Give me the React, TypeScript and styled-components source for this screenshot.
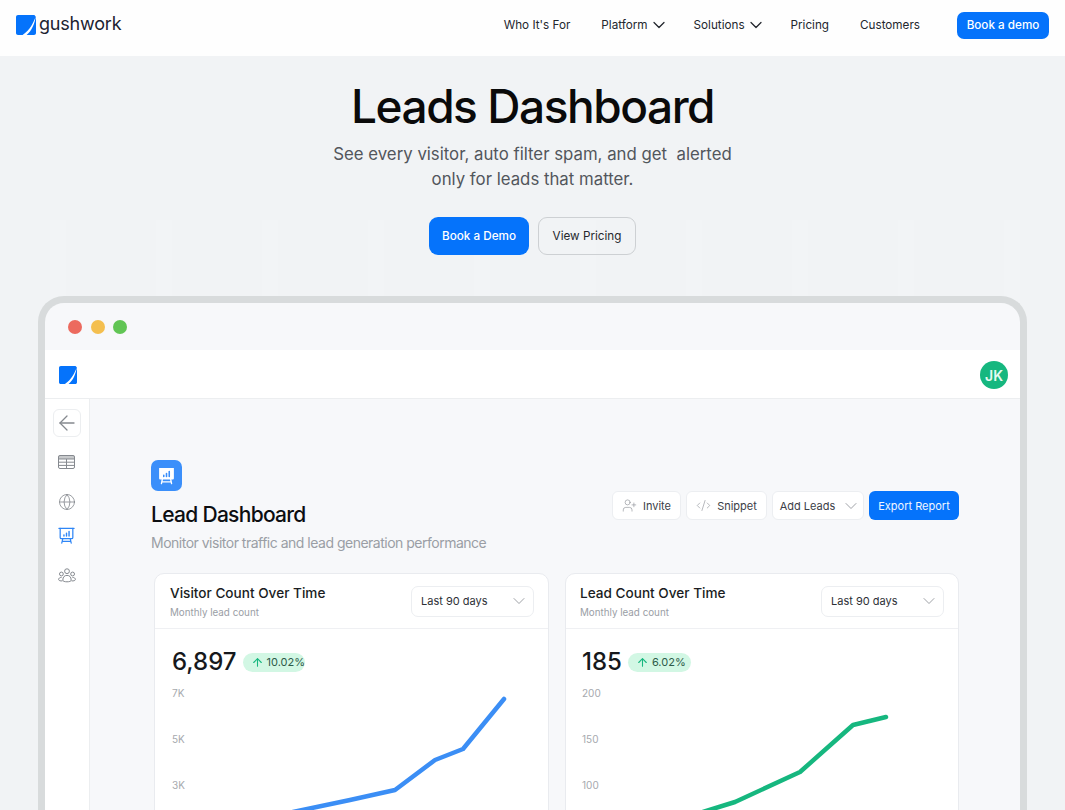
import styled, { createGlobalStyle } from 'styled-components';
import { ArrowLeft, ArrowUp, ChevronDown, CodeXml, Globe, UserPlus } from 'lucide-react';

const Global = createGlobalStyle`
  html, body { margin: 0; padding: 0; }
  body { font-family: Inter, "Liberation Sans", sans-serif; background: #f1f3f5; color: #111418; }
  * { box-sizing: border-box; }
`;

/* ---------- page ---------- */
const Page = styled.div`
  height: 810px;
  overflow: hidden;
  background:
    repeating-linear-gradient(90deg, rgba(255,255,255,0) 0 50px, rgba(255,255,255,.1) 50px 66px, rgba(255,255,255,0) 66px 106px) 0 220px / 100% 100% no-repeat,
    #f1f3f5;
`;

const Header = styled.header`
  height: 56px;
  background: #fefefe;
  display: flex;
  align-items: center;
  justify-content: space-between;
  padding: 0 16px 6px;
`;

const Brand = styled.div`
  display: flex;
  align-items: center;
  gap: 3px;
`;

const Wordmark = styled.span`
  font-size: 18px;
  font-weight: 400;
  letter-spacing: -0.2px;
  color: #1b2230;
  line-height: 20px;
  margin-top: -2px;
`;

const Nav = styled.nav`
  display: flex;
  align-items: center;
`;

const NavItem = styled.a<{ $gap: number }>`
  display: flex;
  align-items: center;
  gap: 1px;
  font-size: 11.7px;
  color: #23272e;
  margin-right: ${p => p.$gap}px;
  svg { color: #23272e; }
`;

const NavButton = styled.a`
  width: 92px;
  height: 27px;
  border-radius: 7px;
  background: #0573fb;
  color: #fff;
  font-size: 11.7px;
  font-weight: 500;
  display: flex;
  align-items: center;
  justify-content: center;
`;

/* ---------- hero ---------- */
const Hero = styled.section`
  display: flex;
  flex-direction: column;
  align-items: center;
  padding-top: 21px;
`;

const Title = styled.h1`
  margin: 0;
  font-size: 46px;
  line-height: 58px;
  font-weight: 530;
  letter-spacing: -1.45px;
  color: #0a0a0a;
`;

const Sub = styled.p`
  margin: 7px 0 0;
  font-size: 16.8px;
  line-height: 24.5px;
  color: #52565c;
  text-align: center;
  white-space: pre-line;
`;

const HeroActions = styled.div`
  display: flex;
  gap: 9px;
  margin-top: 26px;
`;

const HeroButton = styled.a<{ $primary?: boolean }>`
  height: 38px;
  width: ${p => (p.$primary ? 100 : 98)}px;
  border-radius: 9px;
  display: flex;
  align-items: center;
  justify-content: center;
  font-size: 11.7px;
  font-weight: ${p => (p.$primary ? 500 : 400)};
  background: ${p => (p.$primary ? '#0573fb' : 'transparent')};
  color: ${p => (p.$primary ? '#fff' : '#25282d')};
  border: ${p => (p.$primary ? 'none' : '1px solid #cdd0d3')};
`;

/* ---------- browser frame ---------- */
const Frame = styled.div`
  margin: 41px 0 0 38px;
  width: 989px;
  height: 700px;
  border: 7px solid #d8dbdc;
  border-bottom: none;
  border-radius: 26px 26px 0 0;
  background: #f7f8fa;
  overflow: hidden;
`;

const TitleBar = styled.div`
  height: 47px;
  display: flex;
  align-items: center;
  gap: 8.5px;
  padding-left: 23px;
`;

const Dot = styled.span<{ $color: string }>`
  width: 14px;
  height: 14px;
  border-radius: 50%;
  background: ${p => p.$color};
`;

const AppBar = styled.div`
  height: 49px;
  background: #fff;
  border-bottom: 1px solid #eceef0;
  display: flex;
  align-items: center;
  justify-content: space-between;
  padding: 2px 12px 0 14px;
`;

const Avatar = styled.div`
  width: 28px;
  height: 28px;
  border-radius: 50%;
  background: #16b77f;
  color: #e6fbf2;
  font-size: 14px;
  font-weight: 600;
  display: flex;
  align-items: center;
  justify-content: center;
`;

const Body = styled.div`
  display: flex;
  height: 500px;
`;

const Sidebar = styled.aside`
  width: 45px;
  background: #fff;
  border-right: 1px solid #eceef0;
  display: flex;
  flex-direction: column;
  align-items: center;
  padding-top: 10px;
  padding-right: 1px;
  color: #85898f;
`;

const BackButton = styled.div`
  width: 28px;
  height: 28px;
  border: 1px solid #eceef0;
  border-radius: 6px;
  display: flex;
  align-items: center;
  justify-content: center;
  margin-bottom: 16px;
`;

const SideIcon = styled.div<{ $after: number }>`
  height: 18px;
  display: flex;
  align-items: center;
  margin-bottom: ${p => p.$after}px;
`;

const Main = styled.main`
  flex: 1;
  padding: 61px 61px 0 61px;
`;

const TopRow = styled.div`
  display: flex;
  justify-content: space-between;
  align-items: flex-start;
`;

const IconTile = styled.div`
  width: 31px;
  height: 31px;
  border-radius: 7px;
  background: #3b8ffa;
  display: flex;
  align-items: center;
  justify-content: center;
`;

const PageTitle = styled.h2`
  margin: 9px 0 0;
  font-size: 21px;
  line-height: 30px;
  font-weight: 500;
  letter-spacing: -0.7px;
  color: #0c0e11;
`;

const PageSub = styled.p`
  margin: 3px 0 0;
  font-size: 14px;
  line-height: 20px;
  letter-spacing: -0.5px;
  color: #9a9ea5;
`;

const Actions = styled.div`
  display: flex;
  gap: 5px;
  margin-top: 31px;
`;

const ActionButton = styled.button<{ $width: number; $lead?: number; $primary?: boolean }>`
  width: ${p => p.$width}px;
  height: 29px;
  padding: 0 0 0 ${p => p.$lead ?? 0}px;
  border-radius: 6px;
  font-family: inherit;
  font-size: 11px;
  display: flex;
  align-items: center;
  justify-content: center;
  gap: 6px;
  background: ${p => (p.$primary ? '#0573fb' : '#fff')};
  color: ${p => (p.$primary ? '#f0f6ff' : '#3c4047')};
  border: ${p => (p.$primary ? 'none' : '1px solid #eceef1')};
  svg { color: #8b8f95; flex: none; }
`;

const Cards = styled.div`
  display: grid;
  grid-template-columns: 395px 394px;
  gap: 16px;
  margin: 20px 0 0 3px;
`;

const Card = styled.section`
  background: #fff;
  border: 1px solid #e9ebef;
  border-radius: 10px;
  height: 300px;
`;

const CardHead = styled.div<{ $inset: number }>`
  height: 55px;
  border-bottom: 1px solid #eff0f3;
  display: flex;
  align-items: center;
  justify-content: space-between;
  padding: 0 14px 0 ${p => p.$inset}px;
`;

const CardTitle = styled.h3`
  margin: 2px 0 0;
  font-size: 13.6px;
  line-height: 18px;
  font-weight: 500;
  color: #1a1d22;
`;

const CardSub = styled.p`
  margin: 4px 0 0;
  font-size: 9.8px;
  line-height: 14px;
  color: #9a9ea5;
`;

const Select = styled.div`
  width: 123px;
  height: 31px;
  border: 1px solid #eceef1;
  border-radius: 7px;
  display: flex;
  align-items: center;
  justify-content: space-between;
  padding: 0 4px 0 9px;
  font-size: 11px;
  color: #2d3036;
  svg { color: #8b8f95; }
`;

const CardBody = styled.div<{ $inset: number }>`
  padding: 19px 17px 0 ${p => p.$inset + 2}px;
  position: relative;
`;

const Stat = styled.div`
  display: flex;
  align-items: center;
  gap: 6px;
`;

const StatValue = styled.span`
  font-size: 24px;
  line-height: 28px;
  font-weight: 500;
  color: #16181c;
`;

const Badge = styled.span<{ $width: number }>`
  width: ${p => p.$width}px;
  height: 19px;
  padding-left: 8px;
  border-radius: 10px;
  background: #d2f7e4;
  color: #2d5a49;
  font-size: 11px;
  overflow: hidden;
  white-space: nowrap;
  display: flex;
  align-items: center;
  gap: 3px;
  svg { color: #16b77f; flex: none; }
`;

const Axis = styled.div`
  display: flex;
  flex-direction: column;
  gap: 32px;
  margin-top: 10px;
  font-size: 10px;
  line-height: 14px;
  color: #a6a9ae;
`;

const ChartLine = styled.svg`
  position: absolute;
  left: 0;
  top: 0;
  overflow: visible;
`;

const LogoMark = ({ size }: { size: number }) => (
  <svg width={size} height={size} viewBox="0 0 20 20" fill="none">
    <path d="M2 0H18.3L20 1.7V18C20 19.1 19.1 20 18 20H2C.9 20 0 19.1 0 18V2C0 .9 .9 0 2 0Z" fill="#0573fb" />
    <path d="M20 0.6C17.8 7.6 13.6 15.6 6.6 20H10.6C15.6 16.2 18.8 8.8 20 0.6Z" fill="#fff" />
  </svg>
);

const TableIcon = () => (
  <svg width="17" height="14" viewBox="0 0 17 14" fill="none" stroke="currentColor" strokeWidth="1">
    <rect x=".5" y=".5" width="16" height="13" rx="1.5" />
    <path d="M.5 4H16.5M.5 7.2H16.5M.5 10.4H16.5M8.5 4V13.5" />
    <rect x=".5" y=".5" width="16" height="3.5" fill="currentColor" opacity=".45" stroke="none" />
  </svg>
);

const BoardIcon = ({ color, size }: { color: string; size: number }) => (
  <svg width={size} height={size} viewBox="0 0 18 18" fill="none" stroke={color} strokeWidth="1.3" strokeLinecap="round">
    <path d="M1 1.5H17" />
    <path d="M2.3 1.5V11C2.3 11.8 2.8 12.3 3.6 12.3H14.4C15.2 12.3 15.7 11.8 15.7 11V1.5" />
    <path d="M5 12.5L4 17M13 12.5L14 17M4.4 15.2H13.6" />
    <path d="M6.3 9.5V8.3M9 9.5V6.6M11.7 9.5V4.8" strokeWidth="1.5" />
  </svg>
);

const TileIcon = () => (
  <svg width="19" height="19" viewBox="0 0 18 18" fill="none" strokeLinecap="round">
    <path d="M2 2H16V11.5C16 12.3 15.5 12.8 14.7 12.8H3.3C2.5 12.8 2 12.3 2 11.5Z" fill="#fff" />
    <path d="M5 12.8L4.2 16.6M13 12.8L13.8 16.6M4.6 15H13.4" stroke="#fff" strokeWidth="1.3" />
    <path d="M6.4 10V8.8M9 10V7.2M11.6 10V5.2" stroke="#3b8ffa" strokeWidth="1.5" />
  </svg>
);

const TeamIcon = () => (
  <svg width="18" height="16" viewBox="0 0 18 16" fill="none" stroke="currentColor" strokeWidth="1">
    <circle cx="9" cy="3.2" r="2.4" />
    <circle cx="3.4" cy="6" r="1.9" />
    <circle cx="14.6" cy="6" r="1.9" />
    <path d="M4.8 12.3C4.8 8.7 6.6 7.4 9 7.4S13.2 8.7 13.2 12.3C13.2 14.3 4.8 14.3 4.8 12.3Z" />
    <path d="M3.6 9.4C1.6 9.4.6 10.4.6 11.4.6 12.6 2.4 13.1 4.4 12.9M14.4 9.4C16.4 9.4 17.4 10.4 17.4 11.4 17.4 12.6 15.6 13.1 13.6 12.9" />
  </svg>
);

type ChartProps = {
  title: string;
  value: string;
  change: string;
  badgeWidth: number;
  labels: string[];
  color: string;
  points: string;
  inset: number;
};

const ChartCard = ({ title, value, change, badgeWidth, labels, color, points, inset }: ChartProps) => (
  <Card>
    <CardHead $inset={inset}>
      <div>
        <CardTitle>{title}</CardTitle>
        <CardSub>Monthly lead count</CardSub>
      </div>
      <Select>
        Last 90 days
        <ChevronDown size={20} strokeWidth={1} />
      </Select>
    </CardHead>
    <CardBody $inset={inset}>
      <Stat>
        <StatValue>{value}</StatValue>
        <Badge $width={badgeWidth}>
          <ArrowUp size={13} strokeWidth={2} />
          {change}
        </Badge>
      </Stat>
      <Axis>
        {labels.map(l => <span key={l}>{l}</span>)}
      </Axis>
      <ChartLine width="395" height="180">
        <polyline points={points} fill="none" stroke={color} strokeWidth="4.5" strokeLinecap="round" strokeLinejoin="round" />
      </ChartLine>
    </CardBody>
  </Card>
);

export default function App() {
  return (
    <Page>
      <Global />
      <Header>
        <Brand>
          <LogoMark size={20} />
          <Wordmark>gushwork</Wordmark>
        </Brand>
        <Nav>
          <NavItem $gap={31}>Who It's For</NavItem>
          <NavItem $gap={25}>Platform<ChevronDown size={20} strokeWidth={1.5} /></NavItem>
          <NavItem $gap={25}>Solutions<ChevronDown size={20} strokeWidth={1.5} /></NavItem>
          <NavItem $gap={31}>Pricing</NavItem>
          <NavItem $gap={37}>Customers</NavItem>
          <NavButton>Book a demo</NavButton>
        </Nav>
      </Header>

      <Hero>
        <Title>Leads Dashboard</Title>
        <Sub>{'See every visitor, auto filter spam, and get \u00a0alerted\nonly for leads that matter.'}</Sub>
        <HeroActions>
          <HeroButton $primary>Book a Demo</HeroButton>
          <HeroButton>View Pricing</HeroButton>
        </HeroActions>
      </Hero>

      <Frame>
        <TitleBar>
          <Dot $color="#ec6a5e" />
          <Dot $color="#f4bf4f" />
          <Dot $color="#61c554" />
        </TitleBar>
        <AppBar>
          <LogoMark size={18} />
          <Avatar>JK</Avatar>
        </AppBar>
        <Body>
          <Sidebar>
            <BackButton><ArrowLeft size={24} strokeWidth={1.3} /></BackButton>
            <SideIcon $after={22}><TableIcon /></SideIcon>
            <SideIcon $after={15}><Globe size={18} strokeWidth={1.1} /></SideIcon>
            <SideIcon $after={23}><BoardIcon color="#2f86f6" size={17} /></SideIcon>
            <SideIcon $after={0}><TeamIcon /></SideIcon>
          </Sidebar>
          <Main>
            <TopRow>
              <div>
                <IconTile><TileIcon /></IconTile>
                <PageTitle>Lead Dashboard</PageTitle>
                <PageSub>Monitor visitor traffic and lead generation performance</PageSub>
              </div>
              <Actions>
                <ActionButton $width={69}><UserPlus size={15} strokeWidth={1} />Invite</ActionButton>
                <ActionButton $width={81}><CodeXml size={15} strokeWidth={1} />Snippet</ActionButton>
                <ActionButton $width={92} $lead={5}>Add Leads<ChevronDown size={20} strokeWidth={1} /></ActionButton>
                <ActionButton $width={90} $primary>Export Report</ActionButton>
              </Actions>
            </TopRow>
            <Cards>
              <ChartCard
                inset={15}
                title="Visitor Count Over Time"
                value="6,897"
                change="10.02%"
                badgeWidth={62}
                labels={['7K', '5K', '3K']}
                color="#3b8ef5"
                points="100,191 138,183 195,171 240,161 280,131 308,120 349,70"
              />
              <ChartCard
                inset={14}
                title="Lead Count Over Time"
                value="185"
                change="6.02%"
                badgeWidth={63}
                labels={['200', '150', '100']}
                color="#16b77f"
                points="100,194 137,183 169,173 234,143 287,96 320,88"
              />
            </Cards>
          </Main>
        </Body>
      </Frame>
    </Page>
  );
}
